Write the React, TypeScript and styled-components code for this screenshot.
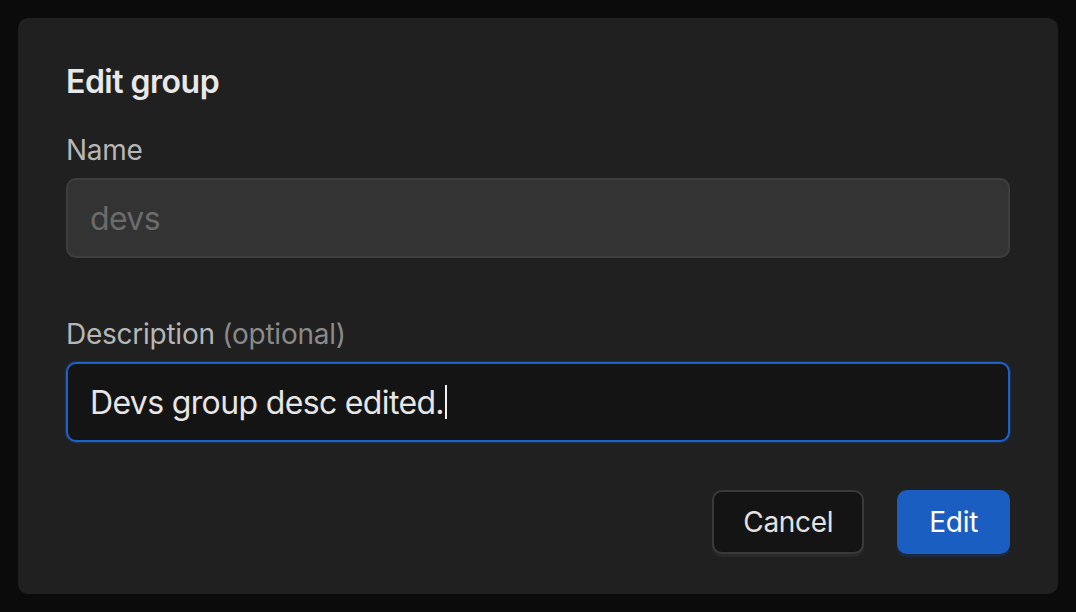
import * as React from 'react';
import styled, { createGlobalStyle } from 'styled-components';

const GlobalStyle = createGlobalStyle`
    html, body {
        margin: 0;
        padding: 0;
        background: #0b0b0b;
    }
    body {
        font-family: Inter, "Noto Sans", "Liberation Sans", sans-serif;
        -webkit-font-smoothing: antialiased;
    }
`;

const Page = styled.div`
    width: 1076px;
    height: 612px;
    padding: 18px;
    box-sizing: border-box;
`;

const Dialog = styled.form`
    box-sizing: border-box;
    width: 1040px;
    height: 576px;
    padding: 44px 48px 40px;
    background: #202020;
    border-radius: 10px;
    display: flex;
    flex-direction: column;
`;

const Title = styled.h2`
    margin: 0 0 30px;
    font-size: 32px;
    line-height: 40px;
    font-weight: 600;
    letter-spacing: -0.5px;
    color: #e8e8e8;
`;

const Field = styled.div<{ $spacing?: number }>`
    display: flex;
    flex-direction: column;
    gap: 10px;
    margin-bottom: ${p => p.$spacing ?? 0}px;
`;

const Label = styled.label`
    font-size: 28px;
    line-height: 36px;
    letter-spacing: -0.25px;
    color: #b6b6b6;
`;

const Hint = styled.span`
    color: #8a8a8a;
`;

const InputWrap = styled.div`
    position: relative;
`;

const TextInput = styled.input<{ $focused?: boolean }>`
    box-sizing: border-box;
    display: block;
    height: 80px;
    width: 100%;
    padding: 0 22px;
    border-radius: 10px;
    font-family: inherit;
    font-size: 32px;
    letter-spacing: -0.65px;
    color: #e6e6e6;
    caret-color: transparent;
    outline: none;
    border: 2px solid ${p => (p.$focused ? '#1d62cc' : '#3e3e3e')};
    background: ${p => (p.$focused ? '#141414' : '#333333')};
    box-shadow: ${p => (p.$focused ? '0 0 0 1px rgba(29, 98, 204, 0.25)' : 'none')};

    &:disabled {
        color: #6b6b6b;
    }
`;

/* mirrors the input text invisibly so the caret lands right after it */
const CaretLayer = styled.div`
    position: absolute;
    inset: 0;
    padding: 0 24px;
    display: flex;
    align-items: center;
    pointer-events: none;
    font-size: 32px;
    letter-spacing: -0.65px;
    white-space: pre;
    color: transparent;
`;

const Caret = styled.span`
    display: inline-block;
    width: 2px;
    height: 34px;
    margin-left: 1px;
    background: #f2f2f2;
`;

const Actions = styled.div`
    display: flex;
    justify-content: flex-end;
    gap: 33px;
    margin-top: 48px;
`;

const Button = styled.button<{ $primary?: boolean }>`
    box-sizing: border-box;
    height: 64px;
    padding: 0 ${p => (p.$primary ? 30 : 29)}px;
    border-radius: 10px;
    font-family: inherit;
    font-size: 28px;
    letter-spacing: -0.3px;
    cursor: pointer;
    color: ${p => (p.$primary ? '#ffffff' : '#e2e2e2')};
    background: ${p => (p.$primary ? '#1a5ec2' : '#141414')};
    border: 2px solid ${p => (p.$primary ? '#1a5ec2' : '#3a3a3a')};
    box-shadow: 0 3px 0 ${p => (p.$primary ? '#1b2a40' : '#2a2a2a')};
`;

export default function App() {
    const [description, setDescription] = React.useState('Devs group desc edited.');

    return (
        <Page>
            <GlobalStyle />
            <Dialog onSubmit={e => e.preventDefault()}>
                <Title>Edit group</Title>
                <Field $spacing={58}>
                    <Label htmlFor="group-name">Name</Label>
                    <TextInput id="group-name" value="devs" disabled readOnly />
                </Field>
                <Field>
                    <Label htmlFor="group-desc">
                        Description <Hint>(optional)</Hint>
                    </Label>
                    <InputWrap>
                        <TextInput
                            id="group-desc"
                            $focused
                            autoFocus
                            value={description}
                            onChange={e => setDescription(e.target.value)}
                        />
                        <CaretLayer aria-hidden>
                            {description}
                            <Caret />
                        </CaretLayer>
                    </InputWrap>
                </Field>
                <Actions>
                    <Button type="button">Cancel</Button>
                    <Button type="submit" $primary>Edit</Button>
                </Actions>
            </Dialog>
        </Page>
    );
}
